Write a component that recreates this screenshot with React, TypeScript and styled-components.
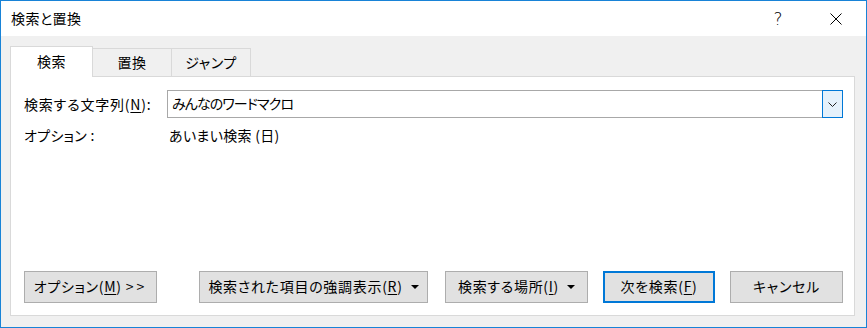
import styled, { createGlobalStyle } from "styled-components";

const GlobalStyle = createGlobalStyle`
	html, body {
		margin: 0;
		padding: 0;
		background: #ffffff;
	}
	body {
		font-family: "Noto Sans CJK JP", "Noto Sans", sans-serif;
		font-feature-settings: "palt";
		color: #000000;
	}
`;

const Window = styled.div`
	width: 867px;
	height: 328px;
	box-sizing: border-box;
	border: 1px solid #1883d7;
	display: flex;
	flex-direction: column;
	background-color: #f0f0f0;
`;

const TitleBar = styled.div`
	height: 35px;
	flex-shrink: 0;
	background-color: #ffffff;
	display: flex;
	align-items: center;
	padding-left: 10px;
	font-size: 14px;
`;

const Title = styled.span`
	flex: 1;
	line-height: 1;
	margin-top: -2px;
	letter-spacing: 0.4px;
`;

const TitleButton = styled.div<{ w: number }>`
	width: ${(p) => p.w}px;
	height: 35px;
	display: flex;
	align-items: center;
	justify-content: center;
	font-family: "DejaVu Sans", sans-serif;
	font-size: 17px;
	font-weight: 300;
`;

const Body = styled.div`
	flex: 1;
	display: flex;
	flex-direction: column;
	padding: 11px 11px 11px 9px;
`;

const TabRow = styled.div`
	display: flex;
	align-items: flex-end;
	height: 30px;
	position: relative;
	z-index: 1;
	margin-bottom: -1px;
`;

const Tab = styled.div<{ active?: boolean }>`
	box-sizing: border-box;
	width: ${(p) => (p.active ? "83px" : "79px")};
	height: ${(p) => (p.active ? "31px" : "29px")};
	border: 1px solid #d9d9d9;
	border-bottom: ${(p) => (p.active ? "none" : "1px solid #d9d9d9")};
	border-left: ${(p) => (p.active ? "1px solid #d9d9d9" : "none")};
	background-color: ${(p) => (p.active ? "#ffffff" : "#f0f0f0")};
	display: flex;
	align-items: center;
	justify-content: center;
	font-size: 14px;
	line-height: 1;
	letter-spacing: 0.5px;
	padding-bottom: ${(p) => (p.active ? "2px" : "1px")};
`;

const Panel = styled.div`
	flex: 1;
	box-sizing: border-box;
	background-color: #ffffff;
	border: 1px solid #d9d9d9;
	display: flex;
	flex-direction: column;
	padding: 13px 11px 12px 13px;
	font-size: 14px;
`;

const FieldRow = styled.div`
	display: grid;
	grid-template-columns: 143px 1fr;
	align-items: center;
`;

const Label = styled.span`
	line-height: 1;
	letter-spacing: 0.8px;
`;

const Combo = styled.div`
	height: 28px;
	box-sizing: border-box;
	border: 1px solid #a8a8a8;
	display: flex;
	align-items: stretch;
`;

const ComboText = styled.div`
	flex: 1;
	display: flex;
	align-items: center;
	padding-left: 4px;
	line-height: 1;
	padding-bottom: 2px;
	letter-spacing: -0.9px;
`;

const ComboButton = styled.div`
	width: 21px;
	box-sizing: border-box;
	margin: -1px -1px -1px 0;
	border: 1px solid #0078d7;
	background-color: #e5f1fb;
	display: flex;
	align-items: center;
	justify-content: center;
`;

const OptionRow = styled.div`
	display: grid;
	grid-template-columns: 145px 1fr;
	margin-top: 10px;
	line-height: 1;
	letter-spacing: 0.3px;
`;

const Spacer = styled.div`
	flex: 1;
`;

const ButtonRow = styled.div`
	display: flex;
	align-items: center;
	gap: 15px;
`;

const Button = styled.div<{ w: number; primary?: boolean; gapBefore?: number }>`
	width: ${(p) => p.w}px;
	height: 32px;
	box-sizing: border-box;
	border: ${(p) => (p.primary ? "2px solid #0078d7" : "1px solid #adadad")};
	background-color: #e1e1e1;
	display: flex;
	align-items: center;
	justify-content: center;
	gap: 8px;
	line-height: 1;
	padding-bottom: 2px;
	letter-spacing: 0.7px;
	margin-left: ${(p) => p.gapBefore ?? 0}px;
`;

const U = styled.span`
	text-decoration: underline;
	text-underline-offset: 2px;
`;

const Arrows = styled.span`
	letter-spacing: 3px;
	margin-left: 4px;
`;

const Caret = styled.span`
	width: 0;
	height: 0;
	border-left: 4px solid transparent;
	border-right: 4px solid transparent;
	border-top: 4px solid #000000;
	margin-top: 1px;
`;

function App() {
	return (
		<>
			<GlobalStyle />
			<Window>
				<TitleBar>
					<Title>検索と置換</Title>
					<TitleButton w={56}>?</TitleButton>
					<TitleButton w={60}>
						<svg width="12" height="12" viewBox="0 0 12 12">
							<path d="M0.5 0.5 L11.5 11.5 M11.5 0.5 L0.5 11.5" stroke="#000" strokeWidth="1" />
						</svg>
					</TitleButton>
				</TitleBar>
				<Body>
					<TabRow>
						<Tab active>検索</Tab>
						<Tab>置換</Tab>
						<Tab>ジャンプ</Tab>
					</TabRow>
					<Panel>
						<FieldRow>
							<Label>
								検索する文字列(<U>N</U>):
							</Label>
							<Combo>
								<ComboText>みんなのワードマクロ</ComboText>
								<ComboButton>
									<svg width="9" height="5" viewBox="0 0 9 5">
										<path d="M0.5 0.5 L4.5 4.5 L8.5 0.5" stroke="#222" fill="none" strokeWidth="1" />
									</svg>
								</ComboButton>
							</Combo>
						</FieldRow>
						<OptionRow>
							<span>オプション :</span>
							<span>あいまい検索 (日)</span>
						</OptionRow>
						<Spacer />
						<ButtonRow>
							<Button w={133}>
								<span>
									オプション(<U>M</U>)<Arrows>&gt;&gt;</Arrows>
								</span>
							</Button>
							<Button w={229} gapBefore={27}>
								<span>
									検索された項目の強調表示(<U>R</U>)
								</span>
								<Caret />
							</Button>
							<Button w={143} gapBefore={2}>
								<span>
									検索する場所(<U>I</U>)
								</span>
								<Caret />
							</Button>
							<Button w={112} primary>
								<span>
									次を検索(<U>F</U>)
								</span>
							</Button>
							<Button w={113}>キャンセル</Button>
						</ButtonRow>
					</Panel>
				</Body>
			</Window>
		</>
	);
}

export default App;
